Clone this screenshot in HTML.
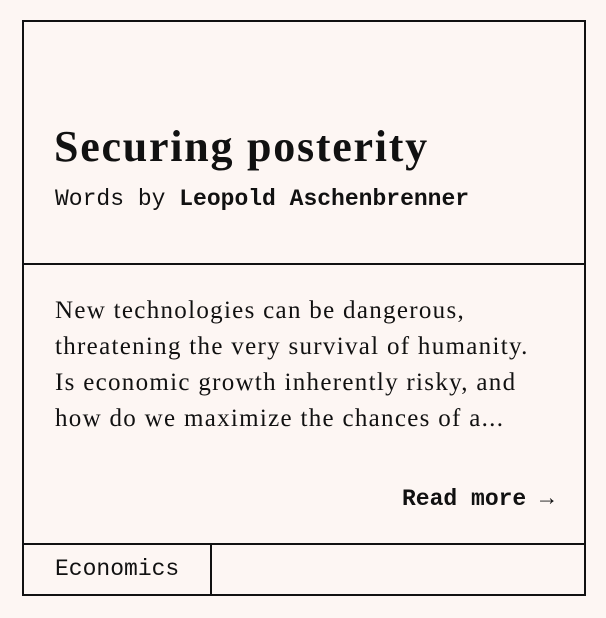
<!DOCTYPE html>
<html><head><style>
html,body{margin:0;padding:0;background:#fdf6f3;}
body{width:606px;height:618px;position:relative;overflow:hidden;}
.card{position:absolute;left:22px;top:20px;width:560px;height:572px;border:2px solid #111;}
.abs{position:absolute;white-space:nowrap;color:#111;}
.serif{font-family:"Liberation Serif",serif;}
.mono{font-family:"Liberation Mono",monospace;}
.hl{position:absolute;left:0;width:560px;height:2px;background:#111;}
</style></head><body>
<div class="card">
  <div class="abs serif" style="left:30px;top:99px;font-size:44px;font-weight:bold;line-height:52px;letter-spacing:1.75px;">Securing posterity</div>
  <div class="abs mono" style="left:31px;top:163px;font-size:23px;line-height:28px;">Words by <b>Leopold Aschenbrenner</b></div>
  <div class="hl" style="top:241px;"></div>
  <div class="abs serif" style="left:31px;top:271px;font-size:25px;line-height:36px;letter-spacing:1.3px;">New technologies can be dangerous,<br>threatening the very survival of humanity.<br>Is economic growth inherently risky, and<br>how do we maximize the chances of a...</div>
  <div class="abs mono" style="left:378px;top:463px;font-size:23px;line-height:28px;font-weight:bold;">Read more →</div>
  <div class="hl" style="top:521px;"></div>
  <div style="position:absolute;left:186px;top:521px;width:2px;height:51px;background:#111;"></div>
  <div class="abs mono" style="left:31px;top:533px;font-size:23px;line-height:28px;">Economics</div>
</div>
</body></html>
